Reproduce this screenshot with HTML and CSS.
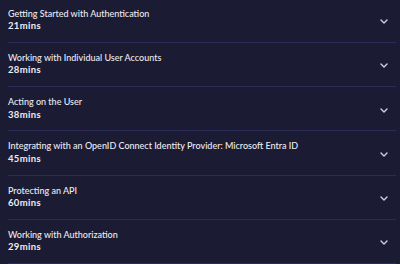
FILE: index.html
```html
<!DOCTYPE html>
<html>
<head>
<meta charset="utf-8">
<link rel="stylesheet" href="styles.css">
</head>
<body>
<div class="list">
  <div class="row">
    <div class="info"><div class="title">Getting Started with Authentication</div><div class="dur">21mins</div></div>
    <svg class="chev" viewBox="0 0 8 5" width="8" height="5"><path d="M1 1 L4 4 L7 1" fill="none" stroke="#cfcfe0" stroke-width="1.4" stroke-linecap="round" stroke-linejoin="round"/></svg>
  </div>
  <div class="row">
    <div class="info"><div class="title">Working with Individual User Accounts</div><div class="dur">28mins</div></div>
    <svg class="chev" viewBox="0 0 8 5" width="8" height="5"><path d="M1 1 L4 4 L7 1" fill="none" stroke="#cfcfe0" stroke-width="1.4" stroke-linecap="round" stroke-linejoin="round"/></svg>
  </div>
  <div class="row">
    <div class="info"><div class="title">Acting on the User</div><div class="dur">38mins</div></div>
    <svg class="chev" viewBox="0 0 8 5" width="8" height="5"><path d="M1 1 L4 4 L7 1" fill="none" stroke="#cfcfe0" stroke-width="1.4" stroke-linecap="round" stroke-linejoin="round"/></svg>
  </div>
  <div class="row">
    <div class="info"><div class="title">Integrating with an OpenID Connect Identity Provider: Microsoft Entra ID</div><div class="dur">45mins</div></div>
    <svg class="chev" viewBox="0 0 8 5" width="8" height="5"><path d="M1 1 L4 4 L7 1" fill="none" stroke="#cfcfe0" stroke-width="1.4" stroke-linecap="round" stroke-linejoin="round"/></svg>
  </div>
  <div class="row">
    <div class="info"><div class="title">Protecting an API</div><div class="dur">60mins</div></div>
    <svg class="chev" viewBox="0 0 8 5" width="8" height="5"><path d="M1 1 L4 4 L7 1" fill="none" stroke="#cfcfe0" stroke-width="1.4" stroke-linecap="round" stroke-linejoin="round"/></svg>
  </div>
  <div class="row">
    <div class="info"><div class="title">Working with Authorization</div><div class="dur">29mins</div></div>
    <svg class="chev" viewBox="0 0 8 5" width="8" height="5"><path d="M1 1 L4 4 L7 1" fill="none" stroke="#cfcfe0" stroke-width="1.4" stroke-linecap="round" stroke-linejoin="round"/></svg>
  </div>
</div>
</body>
</html>
```
FILE: styles.css
```css
html, body {
  margin: 0;
  padding: 0;
  background: #1c1b34;
  overflow: hidden;
}
body {
  width: 400px;
  height: 264px;
  font-family: Lato, "Noto Sans", sans-serif;
  color: #ececf2;
}
.list {
  margin: -1.5px 4px 0 8px;
}
.row {
  display: flex;
  align-items: center;
  justify-content: space-between;
  height: 43.25px;
  border-bottom: 1px solid #2d2b58;
  box-sizing: content-box;
}
.info {
  padding-top: 0;
}
.title {
  font-size: 9px;
  line-height: 12.5px;
  font-weight: 500;
  letter-spacing: 0;
}
.dur {
  font-size: 9.5px;
  line-height: 12.5px;
  font-weight: 700;
  letter-spacing: 0.35px;
}
.chev {
  margin-right: 8px;
  margin-top: 3px;
}
```
